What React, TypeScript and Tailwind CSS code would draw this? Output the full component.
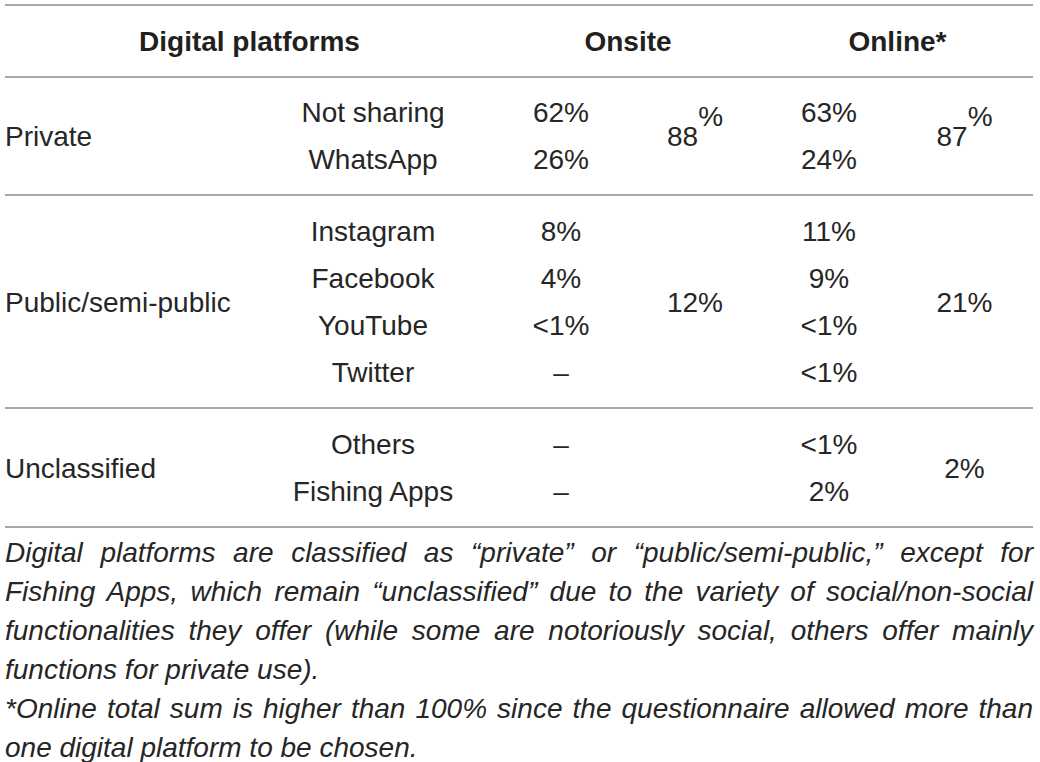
import React from 'react';

type Item = { name: string; onsite: string; online: string };

type Group = {
  label: string;
  items: Item[];
  onsiteTotal: React.ReactNode;
  onlineTotal: React.ReactNode;
  pad: string;
};

// "88%" and "87%" in the source have the percent sign lifted like a superscript
const Raised: React.FC<{ value: string }> = ({ value }) => (
  <span>
    {value}
    <span className="relative -top-[20px]">%</span>
  </span>
);

const groups: Group[] = [
  {
    label: 'Private',
    items: [
      { name: 'Not sharing', onsite: '62%', online: '63%' },
      { name: 'WhatsApp', onsite: '26%', online: '24%' },
    ],
    onsiteTotal: <Raised value="88" />,
    onlineTotal: <Raised value="87" />,
    pad: 'pt-[11px] pb-[11px]',
  },
  {
    label: 'Public/semi-public',
    items: [
      { name: 'Instagram', onsite: '8%', online: '11%' },
      { name: 'Facebook', onsite: '4%', online: '9%' },
      { name: 'YouTube', onsite: '<1%', online: '<1%' },
      { name: 'Twitter', onsite: '–', online: '<1%' },
    ],
    onsiteTotal: '12%',
    onlineTotal: '21%',
    pad: 'pt-[12px] pb-[11px]',
  },
  {
    label: 'Unclassified',
    items: [
      { name: 'Others', onsite: '–', online: '<1%' },
      { name: 'Fishing Apps', onsite: '–', online: '2%' },
    ],
    onsiteTotal: '',
    onlineTotal: '2%',
    pad: 'pt-[12px] pb-[11px]',
  },
];

const footnoteLines = [
  { text: 'Digital platforms are classified as “private” or “public/semi-public,” except for', justify: true },
  { text: 'Fishing Apps, which remain “unclassified” due to the variety of social/non-social', justify: true },
  { text: 'functionalities they offer (while some are notoriously social, others offer mainly', justify: true },
  { text: 'functions for private use).', justify: false },
  { text: '*Online total sum is higher than 100% since the questionnaire allowed more than', justify: true },
  { text: 'one digital platform to be chosen.', justify: false },
];

const cols = 'grid grid-cols-[247px_242px_134px_134px_134px_137px] items-center';

const App: React.FC = () => {
  return (
    <div className="w-[1040px] h-[762px] bg-white pl-[5px] pt-[4px] font-['Liberation_Sans',Arial,sans-serif] text-[28px] text-[#262626]">
      <div className="w-[1028px] border-t-2 border-[#a8a8a8]">
        {/* header */}
        <div className={`${cols} border-b-2 border-[#a8a8a8] pt-[12px] pb-[11px] leading-[47px] font-bold text-[#231f20]`}>
          <div className="col-span-2 text-center">Digital platforms</div>
          <div className="col-span-2 text-center">Onsite</div>
          <div className="col-span-2 text-center">Online*</div>
        </div>

        {groups.map(group => (
          <div
            key={group.label}
            className={`${cols} border-b-2 border-[#a8a8a8] ${group.pad} leading-[47px]`}
          >
            <div>{group.label}</div>
            <div className="flex flex-col items-center">
              {group.items.map(item => (
                <span key={item.name}>{item.name}</span>
              ))}
            </div>
            <div className="flex flex-col items-center">
              {group.items.map(item => (
                <span key={item.name}>{item.onsite}</span>
              ))}
            </div>
            <div className="text-center">{group.onsiteTotal}</div>
            <div className="flex flex-col items-center">
              {group.items.map(item => (
                <span key={item.name}>{item.online}</span>
              ))}
            </div>
            <div className="text-center">{group.onlineTotal}</div>
          </div>
        ))}

        {/* footnote */}
        <div className="pt-[5px] italic leading-[39px]">
          {footnoteLines.map(line => (
            <p
              key={line.text}
              className={line.justify ? 'text-justify [text-align-last:justify]' : 'text-left'}
            >
              {line.text}
            </p>
          ))}
        </div>
      </div>
    </div>
  );
};

export default App;
